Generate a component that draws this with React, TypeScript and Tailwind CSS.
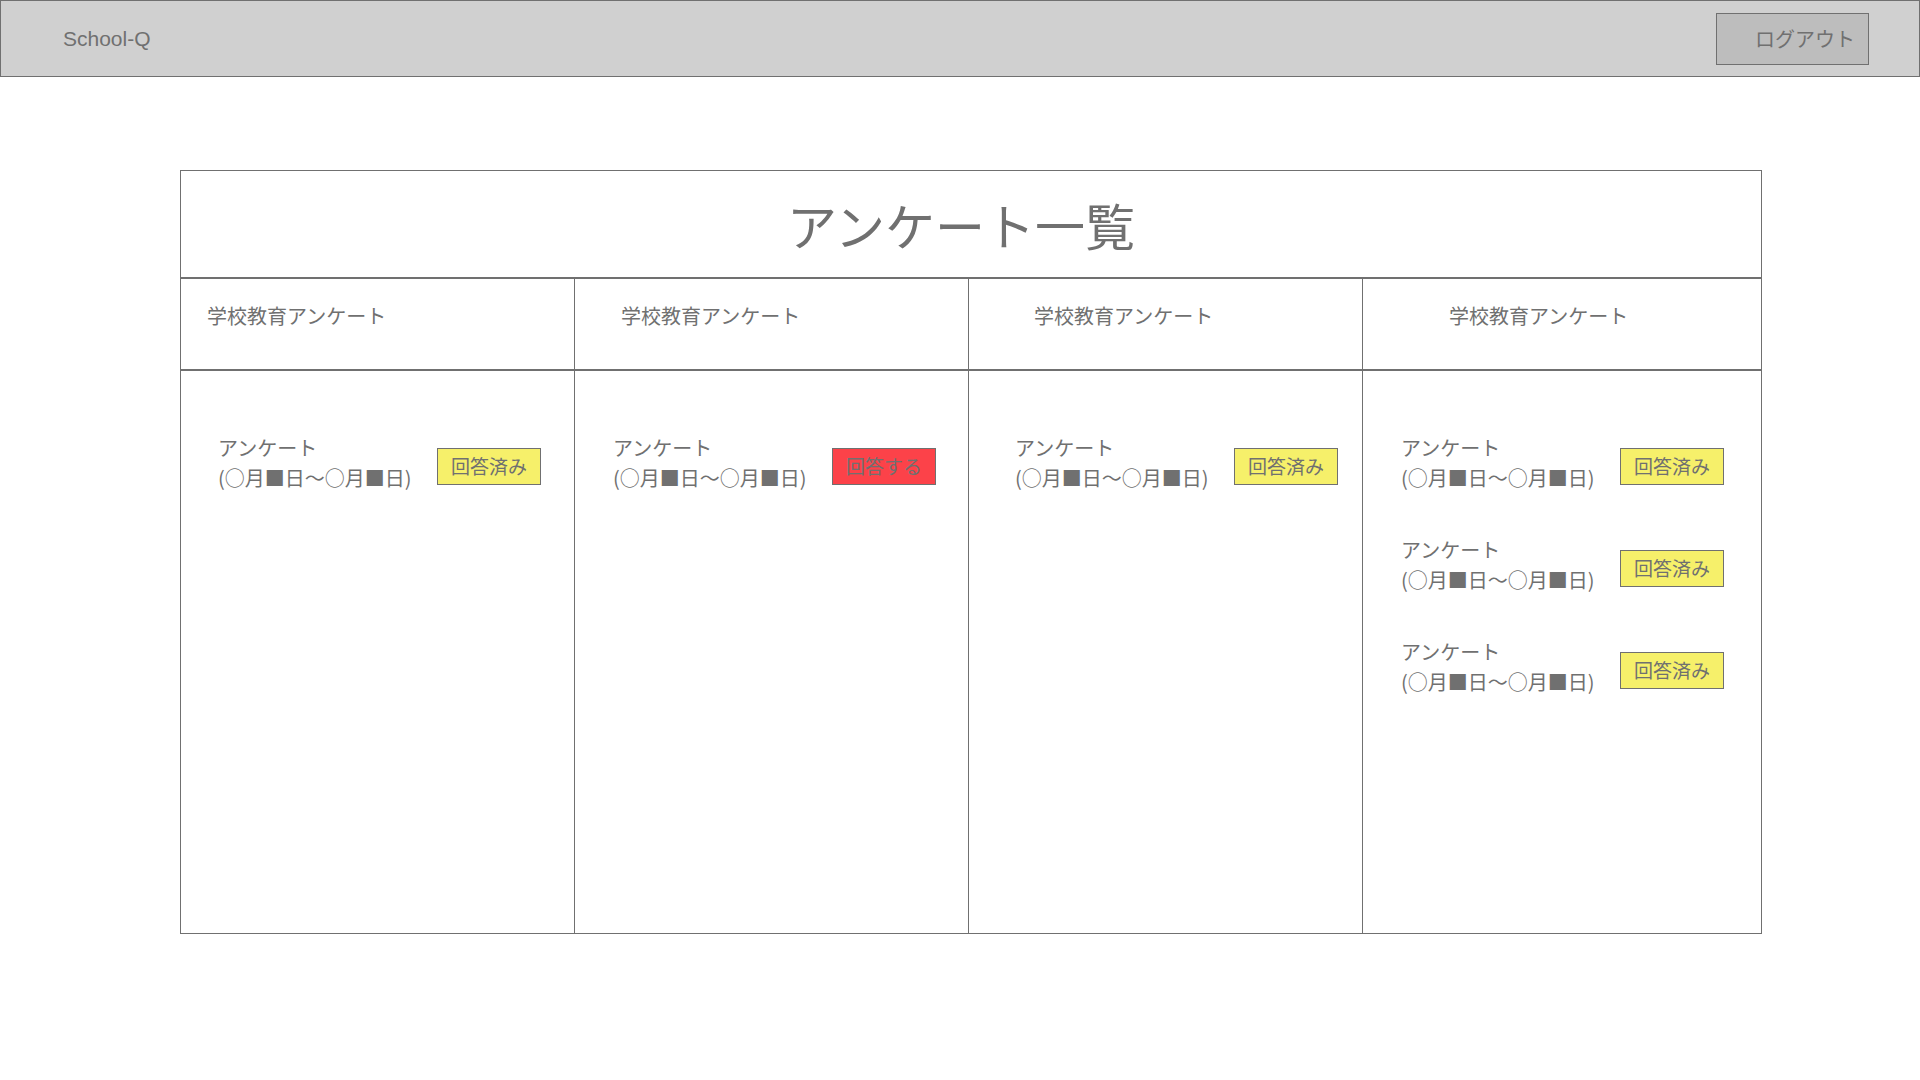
import React from 'react';

type Survey = { answered: boolean };

const columns: { pad: string; headPad: string; items: Survey[] }[] = [
  { headPad: 'pl-[26px]', pad: 'pl-[37px]', items: [{ answered: true }] },
  { headPad: 'pl-[46px]', pad: 'pl-[38px]', items: [{ answered: false }] },
  { headPad: 'pl-[65px]', pad: 'pl-[46px]', items: [{ answered: true }] },
  { headPad: 'pl-[86px]', pad: 'pl-[38px]', items: [{ answered: true }, { answered: true }, { answered: true }] },
];

const jp = { fontFamily: '"Noto Sans CJK JP", "Liberation Sans", sans-serif' };

const SurveyItem: React.FC<Survey> = ({ answered }) => (
  <div className="flex items-center gap-[27px]">
    <div className="w-[192px] whitespace-nowrap text-[20px] leading-[30px] text-[#707070]">
      <div>アンケート</div>
      <div>(○月■日〜○月■日)</div>
    </div>
    <div
      className={`mt-[7px] flex h-[37px] w-[104px] items-center justify-center border border-[#707070] text-[19px] text-[#707070] ${
        answered ? 'bg-[#f6f06a]' : 'bg-[#fc4249]'
      }`}
    >
      {answered ? '回答済み' : '回答する'}
    </div>
  </div>
);

export default function App() {
  return (
    <div className="min-h-screen w-[1920px] bg-white" style={jp}>
      <header className="flex h-[77px] items-center justify-between border border-[#707070] bg-[#d0d0d0] pl-[62px] pr-[50px]">
        <span className="text-[21px] text-[#707070]" style={{ fontFamily: '"Liberation Sans", sans-serif' }}>
          School-Q
        </span>
        <button className="flex h-[52px] w-[153px] items-center border border-[#707070] bg-[#bdbdbd] pl-[38px] text-[20px] text-[#707070]">
          ログアウト
        </button>
      </header>

      <main className="ml-[180px] mt-[93px] w-[1582px] border border-[#707070]">
        <div className="flex h-[108px] items-center justify-center border-b-2 border-[#707070] pr-[20px]">
          <h1 className="text-[50px] font-normal leading-none text-[#707070]">アンケート一覧</h1>
        </div>
        <div className="grid grid-cols-[393px_394px_394px_1fr]">
          {columns.map((col, i) => (
            <div key={i} className={i > 0 ? 'border-l border-[#707070]' : ''}>
              <div className={`h-[92px] border-b-2 border-[#707070] pt-[24px] ${col.headPad}`}>
                <span className="text-[20px] leading-[26px] text-[#707070]">学校教育アンケート</span>
              </div>
              <div className={`flex h-[562px] flex-col gap-[42px] pt-[62px] ${col.pad}`}>
                {col.items.map((it, j) => (
                  <SurveyItem key={j} answered={it.answered} />
                ))}
              </div>
            </div>
          ))}
        </div>
      </main>
    </div>
  );
}
